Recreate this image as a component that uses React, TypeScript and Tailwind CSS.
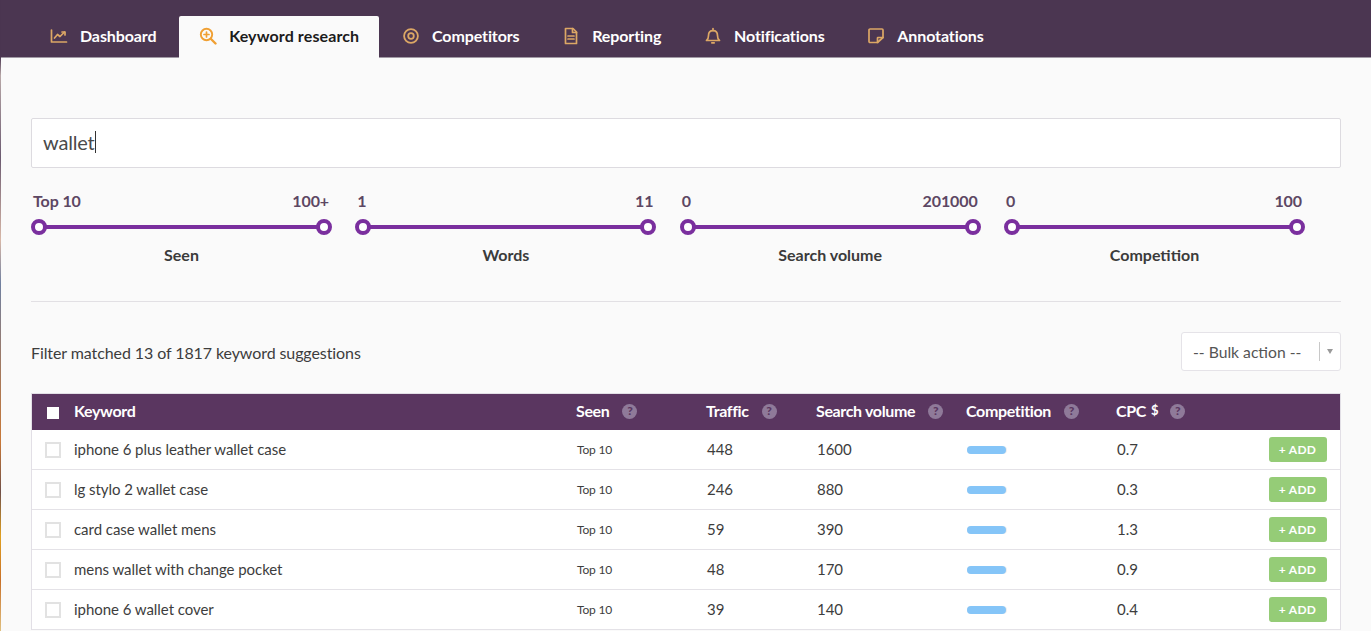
import React from "react";

const Icon = ({ children, className = "" }: { children: React.ReactNode; className?: string }) => (
  <svg viewBox="0 0 18 18" width="18" height="18" fill="none" stroke="currentColor" strokeWidth="1.7" strokeLinecap="round" strokeLinejoin="round" className={className}>
    {children}
  </svg>
);

const tabs = [
  { label: "Dashboard", icon: <><path d="M1.500 3v12h15" /><path d="M4.500 11l3-3.500 2.500 2 4.500-4.500" /><path d="M12 5h3v3" /></> },
  { label: "Keyword research", active: true, icon: <><circle cx="7.500" cy="7.500" r="5.700" strokeWidth="1.900" /><path d="M12 12l4.500 4.500" strokeWidth="2.400" /><path d="M7.500 5v5M5 7.500h5" /></> },
  { label: "Competitors", icon: <><circle cx="9" cy="9" r="6.900" strokeWidth="1.800" /><circle cx="9" cy="9" r="2.800" strokeWidth="1.800" /></> },
  { label: "Reporting", icon: <><path d="M3.500 1.500h7.500l3.500 3.500v11.500h-11z" /><path d="M10.500 1.500v4h4" /><path d="M6 9h6M6 12h6" /></> },
  { label: "Notifications", icon: <><path d="M2.500 13.500c1.500-1 2-2.500 2-5 0-3 2-4.800 4.500-4.800s4.500 1.800 4.500 4.800c0 2.500.5 4 2 5z" /><path d="M9 1.500v2" /><path d="M7.800 15.800h2.400" /></> },
  { label: "Annotations", icon: <><path d="M10.500 15.500H3a1 1 0 0 1-1-1V3a1 1 0 0 1 1-1h12a1 1 0 0 1 1 1v7.500z" /><path d="M10.500 15.500V11a.5.5 0 0 1 .5-.5h5" /></> },
];

const sliders = [
  { min: "Top 10", max: "100+", label: "Seen" },
  { min: "1", max: "11", label: "Words" },
  { min: "0", max: "201000", label: "Search volume" },
  { min: "0", max: "100", label: "Competition" },
];

const rows = [
  ["iphone 6 plus leather wallet case", "448", "1600", "0.7"],
  ["lg stylo 2 wallet case", "246", "880", "0.3"],
  ["card case wallet mens", "59", "390", "1.3"],
  ["mens wallet with change pocket", "48", "170", "0.9"],
  ["iphone 6 wallet cover", "39", "140", "0.4"],
];

const grid = "grid grid-cols-[42px_502px_130px_110px_150px_150px_1fr] items-center";

const Help = () => (
  <span className="ml-[13px] flex h-[15px] w-[15px] items-center justify-center rounded-full bg-[#8f7a99] text-[12px] font-black leading-none tracking-normal text-[#5a3660]">?</span>
);

const Head = ({ children }: { children: React.ReactNode }) => (
  <div className="flex items-center text-[16px] font-bold tracking-[-0.35px] text-white">{children}</div>
);

export default function App() {
  return (
    <div className="flex h-[631px] w-[1371px] overflow-hidden bg-[#fafafa] font-['Lato',sans-serif]">
      <div className="w-px shrink-0 bg-[linear-gradient(180deg,#4a3550_0%,#4a3550_9%,#b8a8a8_12%,#6b5a70_25%,#d8b8a8_38%,#7080a0_45%,#a87858_60%,#c87838_70%,#705048_78%,#e0a020_85%,#c87028_92%,#e0c080_100%)]" />
      <div className="min-w-0 flex-1">
        <nav className="flex h-[58px] items-end border-b border-[#a19aa5] bg-[#4b3651] pl-[29px]">
          <div className="flex h-[41px] gap-[2.700px]">
            {tabs.map((t) => (
              <div
                key={t.label}
                className={
                  "relative flex items-center rounded-t-[2px] px-5 pb-[2px] text-[16px] font-bold " +
                  (t.active ? "-mb-px h-[42px] bg-[#fafafa] tracking-[0.12px] text-[#1c1c1c]" : "tracking-[-0.1px] text-white")
                }
              >
                <span className={"mr-3 " + (t.active ? "text-[#f0a033]" : "text-[#dca765]")}>
                  <Icon>{t.icon}</Icon>
                </span>
                {t.label}
              </div>
            ))}
          </div>
        </nav>

        <main className="px-[30px] pt-[60px]">
          <div className="flex h-[50px] items-center rounded-[2px] border border-[#dddbe0] bg-white px-[11px] pb-[2px] text-[20px] tracking-[-0.2px] text-[#4a4a4a]">
            wallet<span className="ml-px h-[22px] w-px bg-[#333]" />
          </div>

          <div className="mt-[23px] grid grid-cols-[repeat(4,301px)] gap-x-[23.330px]">
            {sliders.map((s) => (
              <div key={s.label}>
                <div className="flex justify-between pl-[2px] pr-[3px] text-[16px] font-bold tracking-[-0.1px] leading-5 text-[#5d4763]">
                  <span>{s.min}</span>
                  <span>{s.max}</span>
                </div>
                <div className="relative mt-[8px] flex h-4 items-center px-2">
                  <div className="h-1 flex-1 bg-[#7a2f9e]" />
                  <span className="absolute left-0 h-4 w-4 rounded-full border-4 border-[#7a2f9e] bg-white" />
                  <span className="absolute right-0 h-4 w-4 rounded-full border-4 border-[#7a2f9e] bg-white" />
                </div>
                <div className="mt-[10px] text-center text-[16px] font-bold leading-5 text-[#3b3b3b]">{s.label}</div>
              </div>
            ))}
          </div>

          <div className="mt-[36px] border-t border-[#e2e0e4]" />

          <div className="mt-[29px] flex h-[40px] items-center justify-between">
            <span className="mt-[3px] text-[16px] tracking-[-0.09px] text-[#3d3d3d]">Filter matched 13 of 1817 keyword suggestions</span>
            <div className="flex h-[39px] w-[160px] items-center rounded-[3px] border border-[#e5e3e8] bg-white pl-[11px] text-[15.700px] text-[#555]">
              <span className="flex-1 pt-[3px]">-- Bulk action --</span>
              <span className="h-[19px] w-px bg-[#c8c8c8]" />
              <span className="mx-[7px] h-0 w-0 border-x-[3.500px] border-t-[5px] border-x-transparent border-t-[#999]" />
            </div>
          </div>

          <div className="mt-[22px] border-x border-t border-[#e2dfe6] bg-white">
            <div className={grid + " h-[36px] bg-[#5a3660] pb-[2px]"}>
              <span className="ml-[15px] mt-[3px] h-3 w-3 bg-white" />
              <Head>Keyword</Head>
              <Head>Seen<Help /></Head>
              <Head>Traffic<Help /></Head>
              <Head>Search volume<Help /></Head>
              <Head>Competition<Help /></Head>
              <Head><span>CPC</span><span className="ml-[5px] text-[13px]">$</span><span className="-ml-[1px]"><Help /></span></Head>
            </div>
            {rows.map((r) => (
              <div key={r[0]} className={grid + " h-[40px] border-b border-[#e4e2e7] text-[15px] tracking-[-0.05px] text-[#3d3d3d]"}>
                <span className="ml-[13px] mt-[1px] h-4 w-4 border-2 border-[#e2e2e2] bg-white" />
                <span>{r[0]}</span>
                <span className="ml-px text-[12px] tracking-[-0.2px]">Top 10</span>
                <span className="ml-px">{r[1]}</span>
                <span className="ml-px">{r[2]}</span>
                <div className="ml-px h-2 w-10 rounded-full bg-[#eeeeee]">
                  <div className="h-2 w-[39px] rounded-full bg-[#85c5f8]" />
                </div>
                <div className="flex items-center justify-between pr-[13px]">
                  <span className="ml-px">{r[3]}</span>
                  <span className="flex h-[25px] w-[58px] items-center justify-center rounded-[3px] bg-[#95cc77] pr-px text-[12px] font-bold tracking-[0.3px] text-white">+ ADD</span>
                </div>
              </div>
            ))}
          </div>
        </main>
      </div>
    </div>
  );
}
